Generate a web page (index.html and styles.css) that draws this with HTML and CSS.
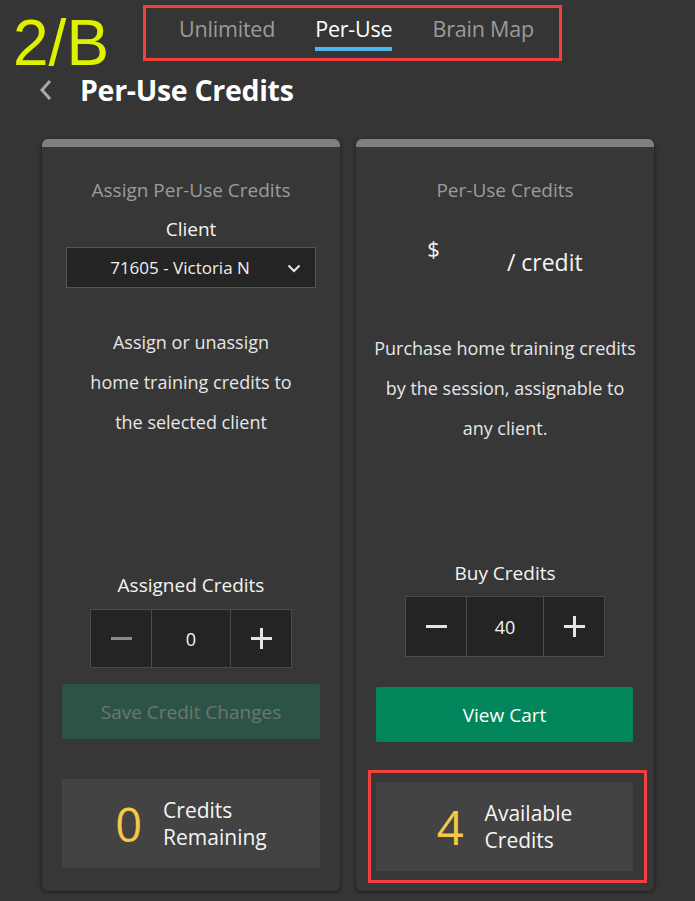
FILE: index.html
```html
<!DOCTYPE html>
<html>
<head>
<meta charset="utf-8">
<link rel="stylesheet" href="styles.css">
</head>
<body>
<div class="page">
  <div class="annot-label">2/B</div>
  <div class="annot-box annot-tabs"></div>
  <nav class="tabs">
    <span class="tab">Unlimited</span>
    <span class="tab active">Per-Use</span>
    <span class="tab">Brain Map</span>
  </nav>
  <header class="title-row">
    <svg class="back" width="14" height="22" viewBox="0 0 14 22"><path d="M11 2 L3 11 L11 20" fill="none" stroke="#a9a9a9" stroke-width="3"/></svg>
    <h1>Per-Use Credits</h1>
  </header>
  <main class="cards">
    <section class="card">
      <div class="card-bar"></div>
      <div class="card-body">
        <div class="card-title">Assign Per-Use Credits</div>
        <div class="label client-label">Client</div>
        <div class="select">
          <span>71605 - Victoria N</span>
          <svg class="caret" width="14" height="9" viewBox="0 0 14 9"><path d="M1.5 1.5 L7 7 L12.5 1.5" fill="none" stroke="#e8e8e8" stroke-width="2"/></svg>
        </div>
        <p class="desc desc-left">Assign or unassign<br>home training credits to<br>the selected client</p>
        <div class="bottom bottom-left">
          <div class="label">Assigned Credits</div>
          <div class="stepper">
            <div class="step-btn"><span class="minus dim"></span></div>
            <div class="step-val">0</div>
            <div class="step-btn"><span class="plus"></span></div>
          </div>
          <button class="btn btn-disabled">Save Credit Changes</button>
          <div class="summary">
            <span class="big">0</span>
            <span class="sum-text">Credits<br>Remaining</span>
          </div>
        </div>
      </div>
    </section>
    <section class="card">
      <div class="card-bar"></div>
      <div class="card-body">
        <div class="card-title">Per-Use Credits</div>
        <div class="price">
          <span class="dollar">$</span>
          <span class="per">/ credit</span>
        </div>
        <p class="desc desc-right">Purchase home training credits<br>by the session, assignable to<br>any client.</p>
        <div class="bottom bottom-right">
          <div class="label">Buy Credits</div>
          <div class="stepper">
            <div class="step-btn"><span class="minus"></span></div>
            <div class="step-val">40</div>
            <div class="step-btn"><span class="plus"></span></div>
          </div>
          <button class="btn btn-green">View Cart</button>
          <div class="summary">
            <span class="big">4</span>
            <span class="sum-text">Available<br>Credits</span>
          </div>
          <div class="annot-box annot-avail"></div>
        </div>
      </div>
    </section>
  </main>
</div>
</body>
</html>
```
FILE: styles.css
```css
* { box-sizing: border-box; }
html, body {
  margin: 0;
  padding: 0;
  background: #353535;
}
body {
  font-family: "Open Sans", "Noto Sans", sans-serif;
  color: #f0f0f0;
  width: 695px;
  height: 901px;
  overflow: hidden;
}
.page {
  position: relative;
  padding-top: 13px;
}
.annot-label {
  position: absolute;
  left: 13px;
  top: 8px;
  font-family: "Liberation Sans", Arial, sans-serif;
  font-size: 64px;
  line-height: 70px;
  color: #def200;
}
.annot-box {
  position: absolute;
  border: 3px solid #f2403f;
}
.annot-tabs {
  left: 143px;
  top: 5px;
  width: 419px;
  height: 56px;
}
.tabs {
  display: flex;
  justify-content: center;
  gap: 40px;
  padding-left: 18px;
  height: 38px;
}
.tab {
  font-size: 21.5px;
  line-height: 32px;
  color: #9b9b9b;
  height: 38px;
  letter-spacing: -0.2px;
}
.tab.active {
  color: #ffffff;
  border-bottom: 4px solid #4fb5ec;
}
.title-row {
  display: flex;
  align-items: center;
  height: 52px;
  padding-left: 39px;
  gap: 27px;
  margin-top: 13px;
}
.back { display: block; }
h1 {
  margin: 0;
  font-size: 28.5px;
  font-weight: 700;
  color: #ffffff;
  letter-spacing: -0.3px;
}
.cards {
  display: grid;
  grid-template-columns: 298px 298px;
  gap: 16px;
  padding-left: 42px;
  margin-top: 23px;
}
.card {
  position: relative;
  height: 752px;
  background: #373737;
  border-radius: 6px;
  box-shadow: 0 1px 4px rgba(0,0,0,0.55);
  display: flex;
  flex-direction: column;
}
.card-bar {
  height: 8px;
  background: #808080;
  border-radius: 6px 6px 0 0;
}
.card-body {
  flex: 1;
  display: flex;
  flex-direction: column;
  align-items: stretch;
  padding: 0 20px;
  text-align: center;
}
.card-title {
  margin-top: 31px;
  font-size: 19px;
  line-height: 24px;
  color: #9c9c9c;
}
.label {
  font-size: 19px;
  line-height: 24px;
  color: #f4f4f4;
}
.client-label { margin-top: 15px; }
.select {
  position: relative;
  margin: 6px 4px 0 4px;
  height: 41px;
  background: #242424;
  border: 1px solid #555555;
  display: flex;
  align-items: center;
  justify-content: center;
  padding-right: 22px;
  font-size: 17px;
  color: #f0f0f0;
}
.caret {
  position: absolute;
  right: 14px;
  top: 16px;
}
.desc {
  margin: 0 -14px;
  font-size: 18px;
  line-height: 40px;
  color: #e6e6e6;
  white-space: nowrap;
}
.desc-left { margin-top: 34px; }
.price {
  display: flex;
  justify-content: center;
  align-items: flex-start;
  gap: 67px;
  margin-top: 32px;
  height: 94px;
}
.dollar {
  font-size: 22px;
  line-height: 28px;
  color: #f4f4f4;
}
.per {
  font-size: 23px;
  line-height: 30px;
  margin-top: 13px;
  color: #f4f4f4;
}
.bottom {
  position: relative;
  margin-top: auto;
  display: flex;
  flex-direction: column;
  align-items: stretch;
}
.bottom-left { padding-bottom: 23px; }
.bottom-right { padding-bottom: 20px; }
.stepper {
  align-self: center;
  display: flex;
  height: 59px;
  border: 1px solid #4b4b4b;
  background: #242424;
  margin-top: 12px;
}
.bottom-right .stepper { margin-top: 11px; height: 61px; }
.step-btn {
  width: 60px;
  display: flex;
  align-items: center;
  justify-content: center;
}
.step-val {
  width: 80px;
  border-left: 1px solid #4b4b4b;
  border-right: 1px solid #4b4b4b;
  display: flex;
  align-items: center;
  justify-content: center;
  font-size: 18px;
  color: #f4f4f4;
}
.bottom-right .step-val { width: 78px; }
.minus {
  display: block;
  width: 21px;
  height: 3px;
  background: #e4e4e4;
}
.minus.dim { background: #8a8a8a; }
.plus {
  position: relative;
  display: block;
  width: 21px;
  height: 21px;
}
.plus::before, .plus::after {
  content: "";
  position: absolute;
  background: #e4e4e4;
}
.plus::before { left: 0; top: 9px; width: 21px; height: 3px; }
.plus::after { left: 9px; top: 0; width: 3px; height: 21px; }
.btn {
  display: block;
  width: 100%;
  height: 55px;
  border: none;
  border-radius: 2px;
  font-family: "Open Sans", "Noto Sans", sans-serif;
  font-size: 19px;
}
.btn-disabled {
  margin-top: 16px;
  background: #2c5446;
  color: #6c7671;
}
.btn-green {
  margin-top: 30px;
  background: #00865a;
  color: #ffffff;
  width: 257px;
}
.summary {
  margin-top: 40px;
  height: 89px;
  background: #434343;
  display: flex;
  align-items: center;
  justify-content: center;
  gap: 21px;
}
.bottom-right .summary { width: 257px; }
.big {
  font-size: 47px;
  line-height: 54px;
  color: #f6c945;
}
.sum-text {
  text-align: left;
  font-size: 21px;
  line-height: 27px;
  color: #f4f4f4;
}
.annot-avail {
  left: -8px;
  bottom: 8px;
  width: 279px;
  height: 113px;
}
```
